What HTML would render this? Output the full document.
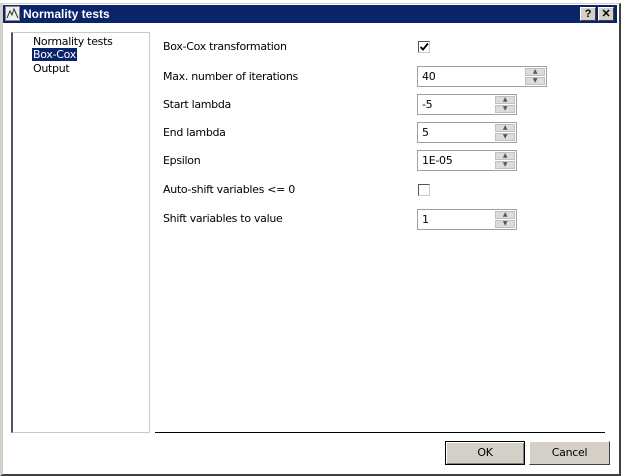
<!DOCTYPE html>
<html><head><style>
*{margin:0;padding:0;box-sizing:border-box}
body{width:621px;height:476px;position:relative;background:#fff;font-family:"DejaVu Sans","Liberation Sans",sans-serif;font-size:11px;overflow:hidden;letter-spacing:-0.3px}
.abs{position:absolute}
.win{left:0;top:3px;width:621px;height:473px;border:1px solid #d4d0c8;border-right:2px solid #404040;border-bottom:2px solid #404040;border-left:3px solid #d4d0c8}
.title{left:3px;top:5px;width:614px;height:18px;background:#0a246a;color:#fff;font-weight:bold;font-size:12px;line-height:18px;padding-left:20px;font-family:"Liberation Sans",sans-serif;letter-spacing:0}
.tb{top:7px;width:16px;height:14px;background:#d4d0c8;border:1px solid;border-color:#fff #404040 #404040 #fff;color:#000;font-size:11px;font-weight:bold;text-align:center;line-height:12px;font-family:"Liberation Sans",sans-serif}
.tree{left:11px;top:32px;width:139px;height:401px;border:1px solid #c8c8c8;border-left:2px solid #555}
.lbl{left:163px}
.fld{left:417px;height:21px;border:1px solid #a0a0a0;background:#fff;padding-left:4px;line-height:19px;font-size:11px}
.sp{position:absolute;right:1px;width:20px;height:8px;background:#dcdcdc;border:1px solid #c0c0c0;font-size:6px;line-height:6px;text-align:center;color:#555}
.cb{left:418px;width:12px;height:12px;border:1px solid #555;border-right-color:#ccc;border-bottom-color:#ccc;background:#fff}
.btn{top:441px;height:24px;background:#d4d0c8;border:1px solid;border-color:#fff #404040 #404040 #fff;text-align:center;line-height:22px;font-size:11px}
</style></head><body>
<div class="abs win"></div>
<div class="abs title">Normality tests</div>
<svg class="abs" style="left:5px;top:6px" width="15" height="15"><rect x="0.5" y="0.5" width="14" height="14" fill="#eee" stroke="#888"/><path d="M2 12 L5 5 L7 9 L9 3 L13 12" fill="none" stroke="#333" stroke-width="1"/></svg>
<div class="abs tb" style="left:580px">?</div>
<div class="abs tb" style="left:598px">✕</div>
<div class="abs tree"></div>
<div class="abs" style="left:33px;top:35px">Normality tests</div>
<div class="abs" style="left:32px;top:48px;background:#0a246a;color:#fff;padding:0 1px;line-height:13px">Box-Cox</div>
<div class="abs" style="left:33px;top:62px">Output</div>

<div class="abs lbl" style="top:40px">Box-Cox transformation</div>
<div class="abs cb" style="top:41px"><svg width="10" height="10" style="position:absolute;left:0;top:0"><path d="M1.5 5 L4 7.5 L9 1.5" fill="none" stroke="#000" stroke-width="1.8"/></svg></div>

<div class="abs lbl" style="top:70px">Max. number of iterations</div>
<div class="abs fld" style="top:66px;width:130px">40<div class="sp" style="top:1px">▲</div><div class="sp" style="top:10px">▼</div></div>

<div class="abs lbl" style="top:98px">Start lambda</div>
<div class="abs fld" style="top:94px;width:100px">-5<div class="sp" style="top:1px">▲</div><div class="sp" style="top:10px">▼</div></div>

<div class="abs lbl" style="top:126px">End lambda</div>
<div class="abs fld" style="top:122px;width:100px">5<div class="sp" style="top:1px">▲</div><div class="sp" style="top:10px">▼</div></div>

<div class="abs lbl" style="top:154px">Epsilon</div>
<div class="abs fld" style="top:150px;width:100px">1E-05<div class="sp" style="top:1px">▲</div><div class="sp" style="top:10px">▼</div></div>

<div class="abs lbl" style="top:183px">Auto-shift variables &lt;= 0</div>
<div class="abs cb" style="top:184px"></div>

<div class="abs lbl" style="top:212px">Shift variables to value</div>
<div class="abs fld" style="top:209px;width:100px">1<div class="sp" style="top:1px">▲</div><div class="sp" style="top:10px">▼</div></div>

<div class="abs" style="left:155px;top:432px;width:450px;height:1px;background:#000"></div>
<div class="abs btn" style="left:445px;width:80px;border:1px solid #000;box-shadow:inset 1px 1px #fff,inset -1px -1px #808080">OK</div>
<div class="abs btn" style="left:529px;width:81px">Cancel</div>
</body></html>
